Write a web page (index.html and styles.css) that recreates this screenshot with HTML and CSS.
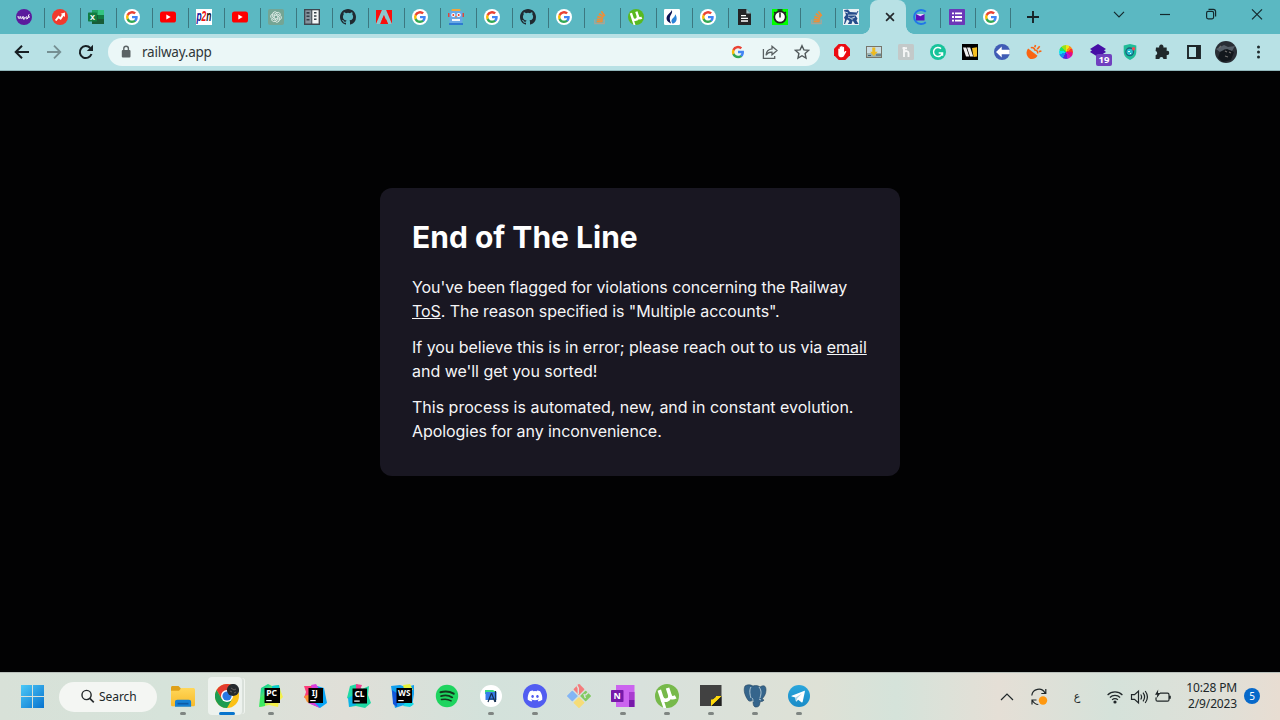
FILE: index.html
```html
<!DOCTYPE html>
<html lang="en">
<head>
<meta charset="utf-8">
<title>railway.app</title>
<link rel="stylesheet" href="styles.css">
</head>
<body>
<svg class="sprite" aria-hidden="true">
  <defs>
    <linearGradient id="win" x1="0" y1="0" x2="1" y2="1"><stop offset="0" stop-color="#4cc9f7"/><stop offset="1" stop-color="#0873cf"/></linearGradient>
    <linearGradient id="fold" x1="0" y1="0" x2="0" y2="1"><stop offset="0" stop-color="#ffd75a"/><stop offset="1" stop-color="#f8bb2c"/></linearGradient>
    <linearGradient id="pc" x1="0" y1="0" x2="1" y2="1"><stop offset="0.2" stop-color="#20d789"/><stop offset="0.7" stop-color="#f5f04a"/></linearGradient>
    <linearGradient id="tg" x1="0" y1="0" x2="0" y2="1"><stop offset="0" stop-color="#2aa6dc"/><stop offset="1" stop-color="#1a8bc7"/></linearGradient>
  </defs>
  <symbol id="g" viewBox="0 0 24 24">
    <path fill="#4285f4" d="M22.56 12.25c0-.78-.07-1.53-.2-2.25H12v4.26h5.92a5.06 5.06 0 0 1-2.2 3.32v2.77h3.57c2.08-1.92 3.27-4.74 3.27-8.1z"/>
    <path fill="#34a853" d="M12 23c2.97 0 5.46-.98 7.28-2.66l-3.57-2.77c-.98.66-2.23 1.06-3.71 1.06-2.86 0-5.29-1.93-6.16-4.53H2.18v2.84A11 11 0 0 0 12 23z"/>
    <path fill="#fbbc05" d="M5.84 14.09a6.6 6.6 0 0 1 0-4.18V7.07H2.18a11 11 0 0 0 0 9.86z"/>
    <path fill="#ea4335" d="M12 5.38c1.62 0 3.06.56 4.21 1.64l3.15-3.15A11 11 0 0 0 2.18 7.07l3.66 2.84C6.71 7.31 9.14 5.38 12 5.38z"/>
  </symbol>
  <symbol id="google" viewBox="0 0 16 16"><circle cx="8" cy="8" r="8" fill="#fff"/><use href="#g" x="1.5" y="1.5" width="13" height="13"/></symbol>
  <symbol id="youtube" viewBox="0 0 16 16"><rect y="2.4" width="16" height="11.2" rx="2.6" fill="#f00"/><path fill="#fff" d="M6.3 5.5v5l4.4-2.5z"/></symbol>
  <symbol id="github" viewBox="0 0 16 16"><path fill="#202a31" d="M8 0C3.58 0 0 3.58 0 8c0 3.54 2.29 6.53 5.47 7.59.4.07.55-.17.55-.38 0-.19-.01-.82-.01-1.49-2.01.37-2.53-.49-2.69-.94-.09-.23-.48-.94-.82-1.13-.28-.15-.68-.52-.01-.53.63-.01 1.08.58 1.23.82.72 1.21 1.87.87 2.33.66.07-.52.28-.87.51-1.07-1.78-.2-3.64-.89-3.64-3.95 0-.87.31-1.59.82-2.15-.08-.2-.36-1.02.08-2.12 0 0 .67-.21 2.2.82a7.6 7.6 0 0 1 4 0c1.53-1.04 2.2-.82 2.2-.82.44 1.1.16 1.92.08 2.12.51.56.82 1.27.82 2.15 0 3.07-1.87 3.75-3.65 3.95.29.25.54.73.54 1.48 0 1.07-.01 1.93-.01 2.2 0 .21.15.46.55.38A8 8 0 0 0 16 8c0-4.42-3.58-8-8-8z"/></symbol>
  <symbol id="stack" viewBox="0 0 16 16"><path fill="none" stroke="#a9a597" stroke-width="1.3" d="M2.800 10.500v4.200h9.400v-4.200"/><path stroke="#ec8f38" stroke-width="1.700" fill="none" d="M4.500 12.600h6.200M4.700 10.400l6.200.6M5.300 7.600l5.800 1.800M6.900 4.700l4.900 3.200M9.400 2.300l3.300 4.600"/></symbol>
  <symbol id="utorrent" viewBox="0 0 24 24"><circle cx="12" cy="12" r="12"/><g transform="rotate(-18 12 12)" fill="none" stroke="#fff"><path stroke-width="3.600" d="M6.500 4v12M6.500 11c0 6.500 8.500 6.500 8.500 0V4.500M15 11.500c0 3.800 1.500 4.600 5 4"/><path stroke-width="2.800" d="M6.200 14v9"/></g></symbol>
</svg>

<header class="tabstrip">
  <div class="tab"><svg viewBox="0 0 16 16"><circle cx="8" cy="8" r="8" fill="#5b1b9d"/><path d="M2 7c.4 3.400 1.700 3.400 2.200.4.200 3 1.600 3 2.100.2.800 3.200 2.600 2.200 1.800.4-1-1.400-2.400 2.600.2 2 1.500-.3 1.300-3 2.400-2.200.8 1.200-1.100 2.600.4 2.200 1.500-.5 1-4.700 2.300-4.800M12 8h2" fill="none" stroke="#fff" stroke-width="1"/></svg></div>
  <div class="tab"><svg viewBox="0 0 16 16"><circle cx="8" cy="8" r="8" fill="#f13a2d"/><path d="M3.700 11.500l2.800-3.600 2.100 1.700 2.600-4" fill="none" stroke="#fff" stroke-width="2"/><path fill="#fff" d="M8.600 4.800l4.300-1.300.1 4.400z"/></svg></div>
  <div class="tab"><svg viewBox="0 0 16 16"><path fill="#185c37" d="M4 1h12v14H4z"/><path fill="#21a366" d="M4 1h6v5H4z"/><path fill="#33c481" d="M10 1h6v5h-6z"/><path fill="#107c41" d="M10 6h6v4h-6z"/><rect y="3.500" width="9" height="9" rx=".7" fill="#107c41"/><text x="4.500" y="10.800" class="glyph" font-size="7.500" fill="#fff">X</text></svg></div>
  <div class="tab"><svg><use href="#google"/></svg></div>
  <div class="tab"><svg><use href="#youtube"/></svg></div>
  <div class="tab"><svg viewBox="0 0 16 16"><path fill="#fff" d="M0 0h16v16H0z"/><text class="p2n" x="0.400" y="6.700" font-size="8.400" transform="scale(1 1.800)"><tspan fill="#11109b">p</tspan><tspan fill="#ee1414">2</tspan><tspan fill="#111">n</tspan></text></svg></div>
  <div class="tab"><svg><use href="#youtube"/></svg></div>
  <div class="tab"><svg viewBox="0 0 16 16"><rect width="16" height="16" rx="2" fill="#74a594"/><g fill="none" stroke="#eef6f3" stroke-width=".8"><path id="knot" d="M6.200 9V5.300l2.700-1.600a2.300 2.300 0 0 1 3.300 2.800"/><use href="#knot" transform="rotate(60 8 8)"/><use href="#knot" transform="rotate(120 8 8)"/><use href="#knot" transform="rotate(180 8 8)"/><use href="#knot" transform="rotate(240 8 8)"/><use href="#knot" transform="rotate(300 8 8)"/></g></svg></div>
  <div class="tab"><svg viewBox="0 0 16 16"><path fill="#3f464f" d="M0 0h16v16H0z"/><path fill="#87939d" d="M1.300 1.300h6v13.200h-6z"/><path fill="#f4f6f7" d="M8.300 1.300h6.300v13.200H8.300z"/><path fill="#35404a" d="M2.500 3h3v1.800h-3zm0 3.500h3v1.600h-3zm0 3.500h3v1.500h-3zM10 3h2.500v1.500H10zm0 3.200h2.500v1.600H10zm0 3.300h2.500V11H10z"/></svg></div>
  <div class="tab"><svg><use href="#github"/></svg></div>
  <div class="tab"><svg viewBox="0 0 16 16"><path fill="#fa0f0c" d="M0 1h16v14H0z"/><path fill="#8cc9ce" d="M5.900 1h4.200L16 15h-3.800l-1.900-4.500H7.600L8 6 4.100 15H0z"/><path fill="#fa0f0c" d="M8 6l3.700 9H9.200l-1.100-2.800H5.400z"/></svg></div>
  <div class="tab"><svg><use href="#google"/></svg></div>
  <div class="tab"><svg viewBox="0 0 16 16"><rect x="3.500" width="9" height="2.500" rx="1" fill="#f3a63b"/><path fill="#d94a3d" d="M0 4h16v4H0z"/><rect x="1.500" y="2" width="13" height="12" rx="1.400" fill="#68a8e6"/><circle cx="5.300" cy="6" r="2.100" fill="#fff"/><circle cx="10.700" cy="6" r="2.100" fill="#fff"/><circle cx="5.300" cy="6" r="1" fill="#e32"/><circle cx="10.700" cy="6" r="1" fill="#e32"/><path fill="#f4f7fa" d="M4 10h8v2H4z"/><path fill="#e77f4a" d="M7.300 7h1.400v1.800H7.300z"/><path fill="#2e7bd1" d="M1 14h14v2H1z"/></svg></div>
  <div class="tab"><svg><use href="#google"/></svg></div>
  <div class="tab"><svg><use href="#github"/></svg></div>
  <div class="tab"><svg><use href="#google"/></svg></div>
  <div class="tab"><svg><use href="#stack"/></svg></div>
  <div class="tab"><svg class="ut-tab"><use href="#utorrent"/></svg></div>
  <div class="tab"><svg viewBox="0 0 16 16"><rect width="16" height="16" rx="1.200" fill="#fff"/><path fill="#0b1050" d="M7.900 1c.7 2.500-.4 3.900-1.400 5.600C5.500 8.300 5.400 11 7 14.400 1.800 12.500 1.600 8.200 4.200 5.500 5.900 3.800 7.200 2.900 7.900 1z"/><path fill="#2a83d8" d="M11.200 5.200c2 2.300 2.700 8-2.500 9.600-2.100-2.700-1.100-4.100.4-5.700 1.100-1.200 1.900-2.100 2.100-3.900z"/></svg></div>
  <div class="tab"><svg><use href="#google"/></svg></div>
  <div class="tab"><svg viewBox="0 0 16 16"><path fill="#242426" d="M2 0h8.400L15 4.400V16H2z"/><path fill="#97bdc2" d="M10.400 0v4.400H15z"/><path stroke="#fff" stroke-width="1.300" d="M5 6.700h5M5 9.300h7M5 12h7"/></svg></div>
  <div class="tab"><svg viewBox="0 0 16 16"><path fill="#0f0" d="M0 0h16v16H0z"/><circle cx="8" cy="8" r="5.700" fill="#fff" stroke="#222" stroke-width="1.700"/><path stroke="#222" stroke-width="1.500" d="M8 3.500v5M5.500 1h5M2.200 3l1.600 1.600M13.800 3l-1.600 1.600"/></svg></div>
  <div class="tab tab--narrow"><svg><use href="#stack"/></svg></div>
  <div class="tab tab--last"><svg viewBox="0 0 16 16"><path fill="#e9f1f4" d="M0 0h16v16H0z"/><path fill="#254c8b" d="M1 1l4-.5 2 2.500 7 .5-1.500 3 2 3-1 2 2 3.500h-3.500l-2.300-3.500L8.500 15H4.800l1.700-3L4 10.500 2 15H1l1-4.500L1 8.500 3 6z"/><path stroke="#e9f1f4" stroke-width=".8" fill="none" d="M2 3l3 1m0 2.200l8-.2M5 8l3 1.500L12 8M8.500 11l1.500-1.500"/><path stroke="#254c8b" fill="none" d="M13 6l2-4"/></svg></div>
  <div class="tab-active"><svg viewBox="0 0 16 16"><path d="M4.100 4.100l7.800 7.800m0-7.800l-7.800 7.800" stroke="#24292c" stroke-width="1.700"/></svg></div>
  <div class="tab tab--after"><svg viewBox="0 0 16 16"><path fill="none" stroke="#2077e8" stroke-width="1.900" d="M13.800 2.800a7 7 0 1 0 0 10.400"/><path fill="#5b13bd" d="M4 5h8.500v6.500H4z"/><path fill="#e6d9ff" d="M4 5h8.500L8.300 7.300z"/></svg></div>
  <div class="tab tab--narrow"><svg viewBox="0 0 16 16"><rect width="16" height="16" rx=".8" fill="#6b38b8"/><path stroke="#fff" stroke-width="1.900" d="M3 4.400h2m1 0h7M3 8h2m1 0h7M3 11.600h2m1 0h7"/></svg></div>
  <div class="tab tab--third"><svg><use href="#google"/></svg></div>
  <div class="newtab"><svg viewBox="0 0 16 16"><path d="M8 2v12M2 8h12" stroke="#182327" stroke-width="1.900"/></svg></div>
  <div class="window-controls">
    <svg viewBox="0 0 16 16"><path d="M3 5.900l5 5 5-5"/></svg>
    <svg viewBox="0 0 16 16"><path d="M3 8.500h10"/></svg>
    <svg viewBox="0 0 16 16"><rect x="3.600" y="5.400" width="7" height="7.400" rx="1.500"/><path d="M5.500 3.400h4.800c1.700 0 2.300.8 2.300 2.300v4.800"/></svg>
    <svg viewBox="0 0 16 16"><path d="M3 3.300l10 10m0-10l-10 10"/></svg>
  </div>
</header>

<nav class="toolbar">
  <div class="nav-buttons">
    <svg viewBox="0 0 16 16"><path d="M15 8H1.800M8 1.700L1.700 8 8 14.300" fill="none" stroke="#171f23" stroke-width="2"/></svg>
    <svg viewBox="0 0 16 16"><path d="M1 8h13.200M8 1.700L14.300 8 8 14.300" fill="none" stroke="#758f92" stroke-width="1.800"/></svg>
    <svg viewBox="0 0 16 16"><path d="M13.500 10A6 6 0 1 1 12.300 4" fill="none" stroke="#171f23" stroke-width="2"/><path fill="#171f23" d="M15 .8v6.300H8.800z"/></svg>
  </div>
  <div class="omnibox">
    <svg class="lock" viewBox="0 0 12 14"><rect x="1.800" y="5" width="8.700" height="7.400" rx="1" fill="#5b6365"/><path d="M3.800 5.400V3.500a2.300 2.300 0 0 1 4.600 0v1.900" fill="none" stroke="#5b6365" stroke-width="1.400"/></svg>
    <span class="url">railway.app</span>
    <div class="omni-actions">
      <svg viewBox="0 0 16 16"><use href="#g" x="1.200" y="1.200" width="13.600" height="13.600"/></svg>
      <svg viewBox="0 0 16 16"><path fill="none" stroke="#5a6163" stroke-width="1.300" d="M1.400 5v9.300h11.300v-2.400M10 2.300l5 4.300-5 4.200V8.200C7.300 8 5.400 9 4 11.200c.3-3.700 2.500-6 6-6.300z"/></svg>
      <svg viewBox="0 0 16 16"><path fill="none" stroke="#50585a" stroke-width="1.400" d="M8 1.700l1.900 4.200 4.600.5-3.400 3.100.9 4.500L8 11.700 4 14l.9-4.500-3.400-3.100 4.600-.5z"/></svg>
    </div>
  </div>
  <div class="extensions">
    <span><svg viewBox="0 0 16 16"><path fill="#eb0b12" d="M4.700 0h6.600L16 4.700v6.600L11.300 16H4.700L0 11.300V4.700z"/><path fill="#fff" d="M4.300 5.200c0-1 1.200-1 1.400 0V3.300c0-1 1.400-1 1.400 0V2.700c0-1 1.500-1 1.500 0v.7c0-1 1.500-1 1.500 0v4.800l1-1.100c.7-.6 1.600.2 1.100.9l-2.600 4.400c-1 1.400-5.300 1.100-5.300-2z"/></svg></span>
    <span><svg viewBox="0 0 16 16"><path fill="#76756b" d="M0 2h16v12H0z"/><path fill="#c9dde3" d="M1 3h14v6H1z"/><path fill="#9fb3ad" d="M1 9h14v4H1z"/><path fill="#edbb21" d="M6.300 3.500h3v4.300h2.500L7.800 12 4 7.800h2.300z"/><path fill="#3b5d78" d="M2 11h3v1H2zm8-.5h5v1h-5z"/></svg></span>
    <span><svg viewBox="0 0 16 16"><rect width="16" height="16" rx="1.500" fill="#c3c9c9"/><path fill="none" stroke="#f5f6f6" stroke-width="1.900" d="M6 3v10M6 8c1.500-1.500 4.500-1.300 4.500 1v4M4.500 4.200H9"/></svg></span>
    <span><svg viewBox="0 0 16 16"><circle cx="8" cy="8" r="8" fill="#17c39a"/><path fill="none" stroke="#fff" stroke-width="1.500" d="M11 4.600A4.500 4.500 0 1 0 12.400 9H8.700m3.800-.7v3.400"/></svg></span>
    <span><svg viewBox="0 0 16 16"><path d="M0 0h16v16H0z"/><path fill="#eee" d="M1 3.500h3.200l3 9H4zM5 3.500h3.200l3 9H8z"/><path fill="#f4bf22" d="M10 4l5-.8v9.300l-3.400.5z"/></svg></span>
    <span><svg viewBox="0 0 16 16"><circle cx="8" cy="8" r="8" fill="#405cb5"/><path fill="#fff" d="M2 8l5.700-5.500v3.200h8v4.600h-8v3.200z"/></svg></span>
    <span><svg viewBox="0 0 16 16"><path fill="#fa6512" d="M2.200 4.500l9.300 7.300c-2.100 3.300-6 4.300-8.700 2.100C0 11.600-.2 7.600 2.200 4.500z"/><path fill="none" stroke="#fa6512" stroke-width="1.500" d="M4.800 3.800c2.300-.6 3.600.4 4 2.200 1.900 0 3.200 1.400 2.900 3.500"/><path stroke="#fa6512" stroke-width="1.600" d="M8.800 3.300L9.500 1M11.200 5.200l2.500-3M12.800 7.600l2.600-.6"/></svg></span>
    <span><i class="wheel"></i></span>
    <span class="badged"><svg viewBox="0 0 16 16"><path fill="#450fa5" d="M8 0l8 5-2 1.200 2 1.800-8 5-8-5 2-1.800L0 5z"/></svg><b>19</b></span>
    <span><svg viewBox="0 0 16 16"><path fill="#1fbd98" d="M8 0l6.300 1.600v6C14.300 12 11.700 14.400 8 16c-3.700-1.600-6.300-4-6.300-8.400v-6z"/><circle cx="7.700" cy="7.800" r="3.800" fill="#24bdce" stroke="#1b6178" stroke-width="1.300"/><path stroke="#e8ffff" d="M6 7.500h2m0 2h1"/><circle cx="11.600" cy="4.800" r="1.700" fill="#ed4b56"/></svg></span>
    <span><svg viewBox="0 0 16 16"><path fill="#20282b" d="M2 3.400h3.200a2.200 2.200 0 1 1 4.200 0h3.300v3.500a2.100 2.100 0 1 1 0 4.100v4H9.400a2 2 0 0 0-4 0H1.600v-3.800a2.100 2.100 0 0 0 0-4.100z"/></svg></span>
    <span><svg viewBox="0 0 16 16"><path fill="none" stroke="#1d2528" stroke-width="1.900" d="M2 2h12v12H2z"/><path fill="#1d2528" d="M10 2h4v12h-4z"/></svg></span>
    <span><svg class="avatar" viewBox="0 0 22 22"><circle cx="11" cy="11" r="11" fill="#292e35"/><path fill="#555e67" d="M1 8l8-4 4 2 7-1-3 5-7-2-5 3z"/><path fill="#12171c" d="M5 11l7-3 7 3-3 8-8 2-5-4z"/><path stroke="#6f6d6c" stroke-width="1.300" d="M10 10l2 1m2 0l2 1M10 15l3 1M4 7l2-2"/></svg></span>
    <span><svg viewBox="0 0 16 16"><g fill="#202b2e"><circle cx="8.500" cy="3" r="1.500"/><circle cx="8.500" cy="8" r="1.500"/><circle cx="8.500" cy="13" r="1.500"/></g></svg></span>
  </div>
</nav>

<main class="page">
  <section class="card">
    <h1>End of The Line</h1>
    <p class="reason">You've been flagged for violations concerning the Railway<br><a href="#">ToS</a>. The reason specified is "Multiple accounts".</p>
    <p class="contact">If you believe this is in error; please reach out to us via <a href="#">email</a><br>and we'll get you sorted!</p>
    <p>This process is automated, new, and in constant evolution.<br><span class="apology">Apologies for any inconvenience.</span></p>
  </section>
</main>

<footer class="taskbar">
  <svg class="start" viewBox="0 0 23 23"><path fill="url(#win)" d="M0 0h11v11H0zm12 0h11v11H12zM0 12h11v11H0zm12 0h11v11H12z"/></svg>
  <div class="search"><svg viewBox="0 0 16 16"><circle cx="7" cy="6.400" r="4.900" fill="none" stroke="#24292b" stroke-width="1.500"/><path d="M10.500 10l4.200 4.200" stroke="#24292b" stroke-width="1.700"/></svg><span>Search</span></div>
  <div class="apps">
    <div class="app running"><svg viewBox="0 0 24 24"><path fill="#dfa019" d="M0 3.600C0 2.500.6 2 1.500 2h6L10 4.500V9H0z"/><path fill="url(#fold)" d="M0 6.800h8L10.500 4H22c1.300 0 2 .6 2 1.800v15c0 1-.6 1.500-1.600 1.500H1.700C.6 22.300 0 21.800 0 20.800z"/><path fill="#1680d3" d="M4 22.800V18c0-1.500.8-2.300 2.300-2.300h11.500c1.500 0 2.300.8 2.300 2.300v4.800z"/><path fill="#0d5ba6" d="M6.500 18.800h11v1.700h-11z"/></svg></div>
    <div class="app current"><svg viewBox="0 0 24 24"><circle cx="12" cy="12" r="12" fill="#fbc116"/><path fill="#e33b2e" d="M1.600 6A12 12 0 0 1 22.400 6H12L6.800 15z"/><path fill="#1d9c51" d="M1.600 6A12 12 0 0 0 12 24l5.200-9H6.800z"/><circle cx="12" cy="12" r="6" fill="#fff"/><circle cx="12" cy="12" r="4.600" fill="#2677e4"/><circle cx="18" cy="6" r="6.100" fill="#252a2e"/><path stroke="#605d5c" d="M16 4l3 2 2-1M15 7l2 1m2 1l2-1" fill="none"/></svg></div>
    <div class="app running"><svg viewBox="0 0 24 24"><path fill="url(#pc)" d="M2 4l7-4 4 2 7-1 2 7 2 5-4 4-1 6-9-2-9 2 0-9z"/><path fill="#3dea62" d="M1 14l5-4v12l-6 1z"/><path fill="#07c9ce" d="M13 2l7-1 1 6-8-2z"/><path d="M5.500 4H21v15H5.500z"/><text class="jb" x="12.500" y="12">PC</text><path fill="#fff" d="M7.200 16h5.500v1.200H7.200z"/></svg></div>
    <div class="app"><svg viewBox="0 0 24 24"><path fill="#fc3c79" d="M1 2h8l4 2-4 8-8 2 2-6z"/><path fill="#fa8f31" d="M1 12l8-2 4 12-9-4z"/><path fill="#08a4f5" d="M14 2l7 2 3 15-7 5-9-4z"/><path fill="#d93ddd" d="M8 1l5-1 3 5H9zM5 19h7l5 5z"/><path d="M5.500 4H20v15H5.500z"/><text class="jb" x="11.800" y="12">IJ</text><path fill="#fff" d="M7.200 16h5.500v1.200H7.200z"/></svg></div>
    <div class="app"><svg viewBox="0 0 24 24"><path fill="#20d9a4" d="M3 2l7-2 5 5 7-3-1 9 3 8-6 5-9-2-7 1 2-7-4-2z"/><path fill="#ee408e" d="M9 0l6 1-2 5-4-1z"/><path fill="#0db4e8" d="M1 14l8-4v11l-7 2z"/><path d="M5.500 4.500H20v15H5.500z"/><text class="jb" x="12.500" y="13">CL</text><path fill="#fff" d="M7.200 16.500h5.500v1.200H7.200z"/></svg></div>
    <div class="app"><svg viewBox="0 0 24 24"><path fill="#109fed" d="M0 2l9-1 6 2 8-2 0 9-2 12-8-1-9 3-2-9z"/><path fill="#e6f13c" d="M12 1l7-1 3 6-9-1z"/><path fill="#1456db" d="M1 6l6 4-1 13-4-3z"/><path fill="#17d8e2" d="M17 14l6 6-4 3-7-1z"/><path d="M5.500 4H21v15H5.500z"/><text class="jb" x="13.200" y="12" textLength="12.500" lengthAdjust="spacingAndGlyphs">WS</text><path fill="#fff" d="M7.200 16h5.500v1.200H7.200z"/></svg></div>
    <div class="app"><svg viewBox="0 0 24 24"><circle cx="12" cy="12" r="11.200" fill="#1ed45f"/><g fill="none" stroke="#14371e" stroke-linecap="round"><path stroke-width="2.100" d="M5.500 8.300c4.500-1.300 9.300-.9 13.200 1.400"/><path stroke-width="1.800" d="M6 12.100c4-1.100 8-.7 11.300 1.300"/><path stroke-width="1.500" d="M6.500 15.600c3.500-.8 6.800-.5 9.600 1.200"/></g></svg></div>
    <div class="app running"><svg viewBox="0 0 24 24"><circle cx="12" cy="12" r="11" fill="#fff"/><path fill="#3bdb83" d="M6 6l8 0 3 2v2H6z"/><path fill="#367deb" d="M6.500 8h11v8h-11z"/><path d="M9 18l3.500-9M16.500 7v11m-4-9l3.500 9m-5.500-3h5" fill="none" stroke="#173151" stroke-width="1.200"/></svg></div>
    <div class="app running"><svg viewBox="0 0 24 24"><circle cx="12" cy="12" r="12" fill="#515df1"/><path transform="translate(4.700 4.700) scale(.61)" fill="#fff" d="M20.317 4.370a19.790 19.790 0 0 0-4.885-1.515.07.07 0 0 0-.079.037c-.21.375-.444.864-.608 1.250a18.270 18.270 0 0 0-5.487 0 12.640 12.640 0 0 0-.617-1.250.08.08 0 0 0-.079-.037A19.740 19.740 0 0 0 3.677 4.370C.533 9.046-.32 13.580.099 18.057a19.900 19.900 0 0 0 6.024 3.087 14.090 14.090 0 0 0 1.310-2.022 13.100 13.100 0 0 1-1.921-1.126l.372-.292c3.928 1.793 8.257 1.783 12.217 0l.373.292a12.300 12.300 0 0 1-1.920 1.127c.36.698.772 1.362 1.309 2.021a19.840 19.840 0 0 0 6.034-3.084c.5-5.177-.838-9.674-3.580-13.690zM8.020 15.330c-1.183 0-2.157-1.085-2.157-2.419s.956-2.419 2.157-2.419c1.210 0 2.176 1.096 2.157 2.420 0 1.333-.956 2.418-2.157 2.418zm7.975 0c-1.183 0-2.157-1.085-2.157-2.419s.955-2.419 2.157-2.419c1.210 0 2.176 1.096 2.157 2.420 0 1.333-.946 2.418-2.157 2.418z"/></svg></div>
    <div class="app"><svg viewBox="0 0 24 24"><g transform="rotate(45 12 12)"><rect x="3.300" y="3.300" width="8" height="8" rx=".8" fill="#f47c7c"/><rect x="12.700" y="3.300" width="8" height="8" rx=".8" fill="#83ca62"/><rect x="3.300" y="12.700" width="8" height="8" rx=".8" fill="#83b5f5"/><rect x="12.700" y="12.700" width="8" height="8" rx=".8" fill="#f6dc77"/><path d="M3 6l3 1 4 4M14 7l4 2M16 3v4" fill="none" stroke="#dce2dc" stroke-width="1.400"/></g></svg></div>
    <div class="app running"><svg viewBox="0 0 24 24"><path fill="#cb64ef" d="M5 1h18.500v22H5z"/><path fill="#a93bd0" d="M18 8h5.500v8H18z"/><path fill="#7719aa" d="M18 16h5.500v7H18z"/><rect y="6" width="12.500" height="12" rx=".8" fill="#7719a9"/><text x="6.200" y="15.300" class="glyph" font-size="9" fill="#fff">N</text></svg></div>
    <div class="app running"><svg class="ut-task" viewBox="0 0 24 24"><use href="#utorrent"/></svg></div>
    <div class="app running"><svg viewBox="0 0 24 24"><path fill="#414141" d="M1 1h21.500v21H1z"/><path fill="#ffd90b" d="M12 12h10.500L12 22z"/><path fill="#414141" d="M12 12h6l-6 6z"/><path fill="#ffd90b" d="M12 17l6.500-5v5z"/><path fill="#202020" d="M12 22l10.500-10v10z"/><path fill="#ffd90b" d="M12 15.500h5V12h5.500L12 22z"/></svg></div>
    <div class="app running"><svg viewBox="0 0 24 24"><path fill="#35658c" stroke="#25445f" stroke-width=".6" d="M2 2c3-2 6-1 8 0 3-1 6 0 7 1 3-2 6-2 6 3 0 4-2 7-4 9l2 1c-1 2-3 1-4 2-.4 5-2 5-5 5-2-1-2-4-2-7-1 1-4 2-5 0C2 12 0 6 2 2z"/><path fill="none" stroke="#d1dfe4" stroke-width=".8" d="M8 3C6 6 7 11 8 14m8-11c3 4 2 7 1 11M9 14c1 1 1 2 1 4m6-3l2 1"/></svg></div>
    <div class="app running"><svg viewBox="0 0 24 24"><circle cx="12" cy="12" r="11" fill="url(#tg)"/><path fill="#fff" d="M4.700 11.700l12.200-4.800c.9-.3 1.100.2.9 1.100l-2.100 9.700c-.2.800-.6.900-1.300.5l-3.200-2.400-1.500 1.500c-.4.400-.8.200-.9-.3l-.5-3.500-3.500-1.100c-.6-.2-.6-.5-.1-.7z"/><path fill="#add3e8" d="M8.500 13.500l6.500-4-4.700 4.700-.7 3.200z"/></svg></div>
  </div>
  <div class="tray">
    <svg class="tray-up" viewBox="0 0 16 16"><path d="M2 11l6-6 6 6"/></svg>
    <svg class="tray-sync" viewBox="0 0 18 18"><path d="M1.800 7.500A7 7 0 0 1 15 5M15.800 1v4.500h-4.500M2 16.500V12h4.500M2.300 12.500c1.500 2.500 3.500 3.800 6 4"/><circle cx="13" cy="12.500" r="4.200" class="dot"/></svg>
    <span class="lang">ع</span>
    <svg class="tray-wifi" viewBox="0 0 16 16"><path d="M.6 6a10.500 10.500 0 0 1 14.800 0M2.900 8.500a7.200 7.200 0 0 1 10.200 0M5.100 10.800a4.100 4.100 0 0 1 5.800 0"/><circle cx="8" cy="13" r="1.600" fill="#202729" stroke="none"/></svg>
    <svg class="tray-vol" viewBox="0 0 18 16"><path d="M1.500 5.700h3L8.500 2v12l-4-3.700h-3zM10.700 5.500q1.800 2.500 0 5M13 3.700q3.200 4.300 0 8.600M15.200 2q4.400 6 0 12"/></svg>
    <svg class="tray-bat" viewBox="0 0 18 16"><path d="M6 4.200h7.500q1.500 0 1.500 1.500v5q0 1.500-1.500 1.500H3.500Q2 12.200 2 10.700V8.500M16.200 6.700v3"/><path d="M4.200.5L1 5.700h2.300L2.500 9.500 6.600 4H4z" fill="#202729" stroke="none"/></svg>
    <div class="clock"><span>10:28 PM</span><span>2/9/2023</span></div>
    <span class="count">5</span>
  </div>
</footer>
</body>
</html>
```
FILE: styles.css
```css
* { box-sizing: border-box; }
body {
  margin: 0;
  width: 1280px;
  height: 720px;
  overflow: hidden;
  display: flex;
  flex-direction: column;
  background: #020203;
  font-family: "Noto Sans", "Open Sans", sans-serif;
}
svg { display: block; flex: none; }
.sprite { position: absolute; width: 0; height: 0; }
.glyph, .jb { font-family: "Noto Sans", sans-serif; font-weight: 700; text-anchor: middle; }
.jb { font-size: 8.500px; fill: #fff; }
.p2n { font-family: "Liberation Sans", sans-serif; font-weight: 700; font-style: italic; }

/* Tab strip */
.tabstrip { flex: none; display: flex; height: 34px; padding-left: 9px; background: #5bb8c2; }
.tab { flex: none; position: relative; width: 36px; padding: 9px 0 0 7px; }
.tab::after { content: ""; position: absolute; right: 0; top: 8px; width: 1px; height: 20px; background: #3c7880; }
.tab svg { width: 16px; height: 16px; }
.tab--narrow { width: 35px; padding-left: 8px; }
.tab--last { width: 34px; }
.tab--last::after { display: none; }
.tab--after { width: 35px; padding-left: 6px; }
.tab--third { width: 35px; }
.tab-active {
  flex: none;
  position: relative;
  width: 36px;
  border-radius: 8px 8px 0 0;
  background: #b8e1e5;
  padding: 9px 0 0 12px;
}
.tab-active svg { width: 16px; height: 16px; }
.tab-active::before, .tab-active::after { content: ""; position: absolute; bottom: 0; width: 8px; height: 8px; }
.tab-active::before { left: -8px; background: radial-gradient(circle at 0 0, transparent 7.500px, #b8e1e5 8px); }
.tab-active::after { right: -8px; background: radial-gradient(circle at 100% 0, transparent 7.500px, #b8e1e5 8px); }
.newtab { padding-top: 9px; margin-left: 14px; width: 16px; height: 34px; }
.newtab svg { width: 16px; height: 16px; }
.window-controls { display: flex; gap: 30px; margin-left: 70px; padding-top: 6px; }
.window-controls svg { width: 16px; height: 16px; fill: none; stroke: #14292d; stroke-width: 1.200; }
.ut-tab { fill: #59b920; }
.ut-task { fill: #77b94b; }

/* Toolbar */
.toolbar { flex: none; display: flex; align-items: center; height: 37px; background: #b8e1e5; border-bottom: 1px solid #91b6ba; }
.nav-buttons { display: flex; gap: 16px; width: 108px; padding-left: 14px; }
.nav-buttons svg { width: 16px; height: 16px; }
.omnibox { display: flex; align-items: center; width: 712px; height: 28px; border-radius: 14px; background: #ebf7f7; padding: 0 10px 0 12px; }
.lock { width: 12px; height: 14px; }
.url { margin-left: 10px; font-size: 13.500px; line-height: 20px; letter-spacing: -0.230px; color: #30383a; }
.omni-actions { display: flex; gap: 16px; margin-left: auto; }
.omni-actions svg { width: 16px; height: 16px; }
.extensions { display: flex; padding-left: 6px; }
.extensions > span { display: flex; align-items: center; justify-content: center; width: 32px; height: 28px; }
.extensions svg { width: 16px; height: 16px; }
.extensions .avatar { width: 22px; height: 22px; }
.wheel { width: 14px; height: 14px; border-radius: 50%; background: conic-gradient(#f2e311 0 30deg, #ff8b12 0 60deg, #ff3424 0 95deg, #e30b83 0 130deg, #bc17d0 0 165deg, #5620dd 0 205deg, #148df2 0 250deg, #0be3ec 0 285deg, #1be36a 0 320deg, #9be116 0); }
.badged { position: relative; }
.badged b { position: absolute; left: 14px; top: 16px; width: 16px; height: 12px; border-radius: 2px; background: #7040bf; color: #fff; font-size: 9.500px; line-height: 12px; text-align: center; }

/* Page */
.page { flex: none; height: 601px; padding-top: 117px; background: #020203; }
.card { width: 520px; height: 287.500px; margin: 0 auto; padding: 31px 32px; border-radius: 12px; background: #191722; color: #fff; font-family: Inter, sans-serif; }
.card h1 { margin: 0 0 20px; font-size: 30px; line-height: 36px; font-weight: 700; white-space: nowrap; }
.card p { margin: 0 0 12px; font-size: 16px; line-height: 24px; white-space: nowrap; color: #f5f5f7; }
.card a { color: inherit; text-decoration: underline; }
.card .reason { letter-spacing: -0.065px; }
.card .contact { letter-spacing: -0.025px; }
.apology { letter-spacing: -0.060px; }

/* Taskbar */
.taskbar {
  flex: none;
  display: flex;
  align-items: center;
  height: 48px;
  border-top: 1px solid #b9c0bb;
  background: linear-gradient(90deg, #d8e1d8 0, #d6e3da 13%, #e0dfd8 27%, #d3e2db 38%, #d8e1dc 50%, #dee1d6 64%, #d5e3da 70%, #e5dfd6 78%, #d5e2da 87%, #dfe0d8 95%, #e8ddd2 100%);
  color: #202729;
}
.start { width: 23px; height: 23px; margin-left: 21px; }
.search { display: flex; align-items: center; width: 98px; height: 30px; margin-left: 15px; padding-left: 21px; border-radius: 15px; background: #f4f6f3; font-size: 12px; }
.search svg { width: 15px; height: 15px; }
.search span { margin-left: 4px; letter-spacing: -0.050px; }
.apps { display: flex; margin-left: 4px; height: 47px; }
.app { position: relative; display: flex; justify-content: center; width: 44px; padding-top: 11px; }
.app svg { position: relative; width: 24px; height: 24px; }
.running::after { content: ""; position: absolute; left: 19px; top: 39px; width: 6px; height: 3px; border-radius: 1.500px; background: #7f8582; }
.current::before { content: ""; position: absolute; left: 3px; top: 4px; width: 34px; height: 38px; border-radius: 4px; background: #edf2ee; box-shadow: 3px 0 0 -1px #d9e0da, 4px 0 0 -1px #f0f4ef; }
.current::after { content: ""; position: absolute; left: 14px; top: 39px; width: 16px; height: 3px; border-radius: 1.500px; background: #0875cd; }
.tray { display: flex; align-items: center; margin-left: 178px; height: 47px; }
.tray svg { fill: none; stroke: #202729; stroke-width: 1.200; }
.tray-up { width: 16px; height: 16px; }
.tray-sync { width: 18px; height: 18px; margin-left: 15px; }
.tray .dot { fill: #ff980f; stroke: none; }
.lang { width: 12px; margin-left: 23px; font-family: "DejaVu Sans", sans-serif; font-size: 11px; text-align: center; }
.tray-wifi { width: 16px; height: 16px; margin-left: 24px; }
.tray-vol { width: 18px; height: 16px; margin-left: 7px; }
.tray-bat { width: 18px; height: 16px; margin-left: 6px; }
.clock { display: flex; flex-direction: column; align-items: flex-end; width: 65px; margin-bottom: 2px; font-size: 12px; line-height: 16px; letter-spacing: -0.150px; white-space: nowrap; }
.count { width: 16px; height: 16px; margin: 0 0 1px 7px; border-radius: 50%; background: #0769ca; color: #fff; font-size: 10px; line-height: 16px; text-align: center; }
```
